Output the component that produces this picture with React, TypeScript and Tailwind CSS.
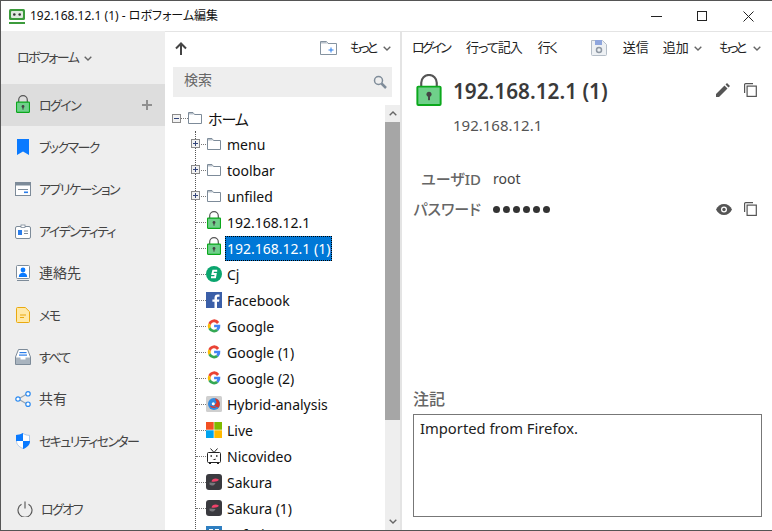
import type { ReactNode } from "react";

function Lock({ className }: { className?: string }) {
  return (
    <svg viewBox="0 0 26 33" className={className}>
      <path d="M5 14V9a8 8 0 0 1 16 0v5" fill="none" stroke="#555" strokeWidth="2.2" />
      <rect x="1" y="13" width="24" height="19" rx="1" fill="#6fd08a" stroke="#0ba81c" strokeWidth="2" />
      <circle cx="13" cy="21" r="2.6" fill="#444" />
      <rect x="12" y="22" width="2" height="5" fill="#444" />
    </svg>
  );
}

function GoogleIcon() {
  return (
    <svg viewBox="0 0 16 16" className="h-4 w-4">
      <path d="M13.2 4 A6.2 6.2 0 0 0 2.4 5.2 L4.8 7 A3.4 3.4 0 0 1 11 5.9 Z" fill="#ea4335" />
      <path d="M2.4 5.2 A6.4 6.4 0 0 0 2.4 10.9 L4.8 9.2 A3.4 3.4 0 0 1 4.8 7 Z" fill="#fbbc05" />
      <path d="M2.4 10.9 A6.3 6.3 0 0 0 12.4 12.7 L10.2 11 A3.4 3.4 0 0 1 4.8 9.2 Z" fill="#34a853" />
      <path d="M8.1 6.8 H14.3 A6.8 6.8 0 0 1 12.4 12.7 L10.2 11 A3.2 3.2 0 0 0 11.2 9.3 H8.1 Z" fill="#4285f4" />
    </svg>
  );
}

function FolderIcon() {
  return (
    <svg viewBox="0 0 14 12" className="h-[12px] w-[14px]">
      <path d="M.5 11.5V.5h4.500l1.500 2h7v9z" fill="#fff" stroke="#7d8b99" />
      <path d="M1 1h3.800l1.100 1.500H1z" fill="#b9c2cb" />
    </svg>
  );
}

function CopyIcon() {
  return (
    <svg viewBox="0 0 13 14" className="h-[14px] w-[13px]" fill="none" stroke="#555" strokeWidth="1.2">
      <path d="M9 .6H1.6a1 1 0 0 0-1 1V10" />
      <rect x="3.1" y="3.1" width="9.2" height="10.3" />
    </svg>
  );
}

function Chevron({ className = "" }: { className?: string }) {
  return (
    <svg viewBox="0 0 8 5" className={`h-[5px] w-2 ${className}`} fill="none" stroke="#666" strokeWidth="1.4">
      <path d="M.7.7 4 4 7.3.7" />
    </svg>
  );
}

const navIcons: Record<string, ReactNode> = {
  login: <Lock className="h-[18px] w-[14px] -translate-y-[1px]" />,
  bookmark: (
    <svg viewBox="0 0 12 16" className="h-4 w-3">
      <path d="M0 0h12v16L6 12.4 0 16z" fill="#0a7aff" />
    </svg>
  ),
  app: (
    <svg viewBox="0 0 16 14" className="h-[14px] w-4">
      <rect x=".5" y=".5" width="15" height="13" fill="#fff" stroke="#7d8b99" />
      <rect x="1" y="1" width="14" height="2.5" fill="#7d8b99" />
      <rect x="3" y="7" width="10" height="1" fill="#7d8b99" />
      <rect x="9" y="9.5" width="4" height="1.6" fill="#2b7de9" />
    </svg>
  ),
  identity: (
    <svg viewBox="0 0 16 15" className="h-[15px] w-4">
      <rect x=".5" y="2.5" width="15" height="12" rx="1.5" fill="#fff" stroke="#7d8b99" />
      <rect x="6" y="1" width="4" height="2.5" fill="#fff" stroke="#7d8b99" strokeWidth=".8" />
      <rect x="3" y="6" width="4" height="5" fill="#2b7de9" />
      <rect x="9" y="6.5" width="4" height="1" fill="#7d8b99" />
      <rect x="9" y="9" width="4" height="1" fill="#7d8b99" />
    </svg>
  ),
  contact: (
    <svg viewBox="0 0 14 16" className="h-4 w-[14px]">
      <rect x=".5" y=".5" width="13" height="13" rx="1" fill="#fff" stroke="#7d8b99" />
      <circle cx="7" cy="5" r="2.4" fill="#0a7aff" />
      <path d="M2.8 12c0-3 2-4.2 4.2-4.2s4.200 1.200 4.200 4.200z" fill="#0a7aff" />
      <rect x="1" y="15" width="12" height="1" fill="#7d8b99" />
    </svg>
  ),
  memo: (
    <svg viewBox="0 0 14 16" className="h-4 w-[14px]">
      <path d="M1.500.5h7.800l4.200 4.200v9.800a1 1 0 0 1-1 1h-11a1 1 0 0 1-1-1v-13a1 1 0 0 1 1-1z" fill="#ffe9a8" stroke="#e9a90f" />
      <rect x="4" y="7.500" width="6" height="1" fill="#e9a90f" />
      <rect x="4" y="10" width="4" height="1" fill="#e9a90f" />
    </svg>
  ),
  all: (
    <svg viewBox="0 0 16 16" className="h-4 w-4">
      <path d="M3.500.5h9L15.500 8v7.500H.5V8z" fill="#fff" stroke="#7d8b99" />
      <rect x="4.500" y="3" width="7" height="1.200" fill="#2b7de9" />
      <rect x="4" y="5.500" width="8" height="1.200" fill="#2b7de9" />
      <path d="M1 8.500h4.500v2h5v-2H15V15H1z" fill="#a9b4bf" />
    </svg>
  ),
  share: (
    <svg viewBox="0 0 16 16" className="h-4 w-4" fill="#fff" stroke="#2b8af0" strokeWidth="1.200">
      <path d="M5 7 11 3.500M5 9l6 3.500" stroke="#9aa5b0" />
      <circle cx="3" cy="8" r="2.200" />
      <circle cx="13" cy="2.800" r="2.200" />
      <circle cx="13" cy="13.200" r="2.200" />
    </svg>
  ),
  security: (
    <svg viewBox="0 0 14 16" className="h-4 w-[14px]">
      <path d="M7 .5c2 1.200 4 1.800 6.500 1.800V8c0 3.600-2.800 6-6.500 7.500C3.300 14 .5 11.600.5 8V2.300C3 2.300 5 1.700 7 .5z" fill="#fff" stroke="#a9c6ea" />
      <path d="M7 0v8H0V2c2.500 0 5-.7 7-2zM7 8h7c0 4-3 6.500-7 8z" fill="#0a7aff" />
    </svg>
  ),
};

const navItems = [
  { key: "login", label: "ログイン", active: true, kana: true },
  { key: "bookmark", label: "ブックマーク", kana: true },
  { key: "app", label: "アプリケーション", kana: true },
  { key: "identity", label: "アイデンティティ", kana: true },
  { key: "contact", label: "連絡先", kana: false },
  { key: "memo", label: "メモ", kana: true },
  { key: "all", label: "すべて", kana: true },
  { key: "share", label: "共有", kana: false },
  { key: "security", label: "セキュリティセンター", kana: true },
];

const treeIcons: Record<string, ReactNode> = {
  folder: <FolderIcon />,
  lock: <Lock className="h-[18px] w-[14px] -translate-y-[2px]" />,
  cj: (
    <svg viewBox="0 0 16 16" className="h-4 w-4">
      <circle cx="8" cy="8" r="8" fill="#0aa56e" />
      <path d="M11.200 4.800H7.200L6.400 8h3.300l-.6 3.200H5" fill="none" stroke="#fff" strokeWidth="1.900" />
    </svg>
  ),
  facebook: (
    <svg viewBox="0 0 16 16" className="h-4 w-4">
      <rect width="16" height="16" fill="#3b5fa8" />
      <path d="M11 16V9.800h2l.4-2.400H11V6c0-.8.3-1.200 1.200-1.200h1.300V2.600C13 2.500 12.300 2.500 11.700 2.500 9.700 2.500 8.500 3.700 8.500 5.800v1.600H6.400v2.400h2.100V16z" fill="#fff" />
    </svg>
  ),
  google: <GoogleIcon />,
  hybrid: (
    <svg viewBox="0 0 16 16" className="h-4 w-4">
      <rect width="16" height="16" rx="1.500" fill="#cfcfcf" />
      <circle cx="8" cy="8" r="6" fill="#2f8ae0" />
      <path d="M9 2.200a6 6 0 0 1 3.500 9.500L8 9.800 10.500 6.500z" fill="#d9362b" />
      <path d="M3.500 9.500C5 12 8 12.500 10.500 11.500L7.500 10.500z" fill="#d9362b" />
      <circle cx="7.300" cy="7.800" r="1.500" fill="#fff" />
    </svg>
  ),
  live: (
    <svg viewBox="0 0 16 16" className="h-4 w-4">
      <rect width="7.700" height="7.700" fill="#f25022" />
      <rect x="8.300" width="7.700" height="7.700" fill="#7fba00" />
      <rect y="8.300" width="7.700" height="7.700" fill="#00a4ef" />
      <rect x="8.300" y="8.300" width="7.700" height="7.700" fill="#ffb900" />
    </svg>
  ),
  nico: (
    <svg viewBox="0 0 16 16" className="h-4 w-4" fill="none" stroke="#222">
      <rect x="1.500" y="4.500" width="13" height="10" rx="1" />
      <path d="M4.500.5 8 4.500 11.500.5" />
      <path d="M4.500 8h1.500M10 8h1.500" strokeWidth="1.500" />
      <path d="M6.500 12h3V10.500z" fill="#222" stroke="none" />
      <path d="M3 15.500h2M11 15.500h2" />
    </svg>
  ),
  sakura: (
    <svg viewBox="0 0 16 16" className="h-4 w-4">
      <rect width="16" height="16" rx="3" fill="#3a3a3f" />
      <path d="M5.500 7.500C6 4.500 10 3.500 13 5.800 12 7.500 8.500 8 5.500 7.500z" fill="#f0426a" />
      <path d="M3.500 8.500 9.500 9c-.5 2.500-4 3.500-6 1.500z" fill="#77777c" />
    </svg>
  ),
  safari: (
    <svg viewBox="0 0 16 16" className="h-4 w-4">
      <rect width="16" height="16" fill="#2f7fc1" />
      <rect x="3" y="3" width="4" height="13" fill="#fff" />
      <rect x="9" y="3" width="4" height="13" fill="#fff" />
    </svg>
  ),
};

const treeRows = [
  { label: "menu", icon: "folder", expand: true },
  { label: "toolbar", icon: "folder", expand: true },
  { label: "unfiled", icon: "folder", expand: true },
  { label: "192.168.12.1", icon: "lock" },
  { label: "192.168.12.1 (1)", icon: "lock", selected: true },
  { label: "Cj", icon: "cj" },
  { label: "Facebook", icon: "facebook" },
  { label: "Google", icon: "google" },
  { label: "Google (1)", icon: "google" },
  { label: "Google (2)", icon: "google" },
  { label: "Hybrid-analysis", icon: "hybrid" },
  { label: "Live", icon: "live" },
  { label: "Nicovideo", icon: "nico" },
  { label: "Sakura", icon: "sakura" },
  { label: "Sakura (1)", icon: "sakura" },
  { label: "Safari", icon: "safari" },
];

function ExpandBox({ sign }: { sign: "+" | "-" }) {
  return (
    <svg viewBox="0 0 9 9" className="h-[9px] w-[9px]">
      <rect x=".5" y=".5" width="8" height="8" fill="#f2f2f2" stroke="#8a8a8a" />
      <rect x="2" y="4" width="5" height="1" fill="#33457a" />
      {sign === "+" && <rect x="4" y="2" width="1" height="5" fill="#33457a" />}
    </svg>
  );
}

function Sidebar() {
  return (
    <aside className="flex w-[164px] shrink-0 flex-col bg-[#eeeeee] text-[#444]">
      <div className="flex h-[53px] items-center gap-[6px] pl-4 pt-[1px] text-[13px] tracking-[-1.6px] whitespace-nowrap">
        ロボフォーム
        <Chevron />
      </div>
      {navItems.map((item) => (
        <div
          key={item.key}
          className={`flex h-[42px] items-center ${item.active ? "bg-[#dddddd]" : ""}`}
        >
          <span className="mr-[1px] flex w-[37px] shrink-0 justify-center pl-[7px]">{navIcons[item.key]}</span>
          <span className={`flex-1 whitespace-nowrap ${item.kana ? "pt-[2px] text-[13px] tracking-[-1.6px]" : "pb-[2px] text-[14px]"}`}>
            {item.label}
          </span>
          {item.active && (
            <svg viewBox="0 0 10 10" className="mr-[13px] h-[10px] w-[10px]">
              <path d="M4 0h2v4h4v2H6v4H4V6H0V4h4z" fill="#8f8f8f" />
            </svg>
          )}
        </div>
      ))}
      <div className="mt-auto flex h-[42px] items-center">
        <span className="flex w-[40px] shrink-0 justify-center pl-[8px]">
          <svg viewBox="0 0 16 16" className="h-4 w-4" fill="none" stroke="#555" strokeWidth="1.100">
            <path d="M8 .5v7M4.500 3.200a7 7 0 1 0 7 0" />
          </svg>
        </span>
        <span className="pt-[2px] text-[13px] tracking-[-1.6px]">ログオフ</span>
      </div>
    </aside>
  );
}

function TreePane() {
  return (
    <section className="flex w-[237px] shrink-0 flex-col border-r-2 border-[#e4e4e4]">
      <div className="flex h-[29px] shrink-0 items-center pl-[10px] pr-[9px] pt-[3px] text-[13px] text-[#222]">
        <svg viewBox="0 0 12 13" className="h-[13px] w-3" fill="none" stroke="#444" strokeWidth="2">
          <path d="M6 13V1.500M1 6.500l5-5 5 5" />
        </svg>
        <svg viewBox="0 0 17 14" className="ml-auto h-[14px] w-[17px]">
          <path d="M.5 13.500V.5h6l1.500 2h8.500v11z" fill="#fff" stroke="#8593a0" />
          <path d="M1 1h5l1.300 1.500H1z" fill="#b9c2cb" />
          <path d="M11 6.500v5M8.500 9h5" stroke="#2b7de9" />
        </svg>
        <span className="ml-[13px] tracking-[-3px] whitespace-nowrap">もっと</span>
        <Chevron className="ml-[8px]" />
      </div>
      <div className="mx-2 mt-[6px] flex h-[30px] shrink-0 items-center justify-between bg-[#eeeeee] pl-[11px] pr-[5px] text-[14px] text-[#666]">
        <span className="pb-[5px]">検索</span>
        <svg viewBox="0 0 14 14" className="h-[14px] w-[14px]" fill="none" stroke="#7f8c99" strokeWidth="1.500">
          <circle cx="5.500" cy="5.500" r="4" />
          <path d="M8.500 8.500 13 13" strokeWidth="2.500" />
        </svg>
      </div>
      <div className="mt-2 flex min-h-0 flex-1">
        <div className="min-w-0 flex-1 overflow-hidden pl-[7px] text-[14px] text-[#111]">
          <div className="flex h-[26px] items-center">
            <ExpandBox sign="-" />
            <span className="h-0 w-[7px] border-t border-dotted border-[#777]" />
            <FolderIcon />
            <span className="ml-[6px] pt-[2px] text-[15px] tracking-[-1px]">ホーム</span>
          </div>
          <div className="ml-[23px] border-l border-dotted border-[#555]">
            {treeRows.map((row) => (
              <div key={row.label} className="relative flex h-[26px] items-center">
                {row.expand && (
                  <span className="absolute -left-[5px] top-[8px] flex">
                    <ExpandBox sign="+" />
                  </span>
                )}
                <span className="h-0 w-[10px] shrink-0 border-t border-dotted border-[#777]" />
                <span className="flex w-4 shrink-0 justify-center">{treeIcons[row.icon]}</span>
                {row.selected ? (
                  <span className="ml-[3px] flex h-[25px] items-center border border-dotted border-black bg-[#0078d7] px-[1px] whitespace-nowrap text-white">
                    {row.label}
                  </span>
                ) : (
                  <span className="ml-[5px] whitespace-nowrap">{row.label}</span>
                )}
              </div>
            ))}
          </div>
        </div>
        <div className="flex w-[15px] shrink-0 flex-col bg-[#eeeeee]">
          <div className="flex h-[17px] items-center justify-center">
            <Chevron className="rotate-180" />
          </div>
          <div className="h-[298px] bg-[#a6a6a6]" />
          <div className="mt-auto flex h-[17px] items-center justify-center">
            <Chevron />
          </div>
        </div>
      </div>
    </section>
  );
}

function DetailPane() {
  return (
    <section className="flex min-w-0 flex-1 flex-col text-[#333]">
      <div className="flex h-[29px] shrink-0 items-center pl-[10px] pr-[11px] pt-[3px] text-[13px] whitespace-nowrap text-[#222]">
        <span className="tracking-[-2.6px]">ログイン</span>
        <span className="ml-[17px] tracking-[-1px]">行って記入</span>
        <span className="ml-[16px] tracking-[-1.5px]">行く</span>
        <svg viewBox="0 0 16 16" className="ml-[34px] h-4 w-4">
          <path d="M.5.5h11l4 4v10a1 1 0 0 1-1 1h-13a1 1 0 0 1-1-1z" fill="#eef1f4" stroke="#b4bdc7" />
          <rect x="4" y="0" width="7" height="5" fill="#8fa6dd" />
          <circle cx="8" cy="10" r="2.500" fill="none" stroke="#8e98a3" strokeWidth="1.500" />
        </svg>
        <span className="ml-[16px]">送信</span>
        <span className="ml-[14px]">追加</span>
        <Chevron className="ml-[5px]" />
        <span className="ml-auto tracking-[-3px]">もっと</span>
        <Chevron className="ml-[9px]" />
      </div>
      <div className="mt-[13px] flex h-[32px] shrink-0 items-center pl-[14px] pr-[15px]">
        <Lock className="h-[32px] w-[26px]" />
        <h1 className="ml-[11px] pt-[3px] text-[20.75px] font-semibold whitespace-nowrap text-[#3a3a3a]">192.168.12.1 (1)</h1>
        <svg viewBox="0 0 14 14" className="ml-auto h-[14px] w-[14px]">
          <path d="M0 14v-3L8.500 2.500l3 3L3 14zM9.500 1.500 11 0l3 3-1.500 1.500z" fill="#555" />
        </svg>
        <span className="ml-[14px] flex"><CopyIcon /></span>
      </div>
      <p className="ml-[51px] mt-[9px] text-[15px] leading-[20px] text-[#555]">192.168.12.1</p>
      <div className="mt-[34px] flex h-[20px] items-center text-[14px]">
        <span className="w-[79px] text-right text-[15px] font-medium whitespace-nowrap text-[#666]">ユーザID</span>
        <span className="ml-[12px] pb-[2px] text-[#444]">root</span>
      </div>
      <div className="mt-[10px] flex h-[20px] items-center pr-[15px] text-[14px]">
        <span className="w-[79px] text-right text-[15px] font-medium whitespace-nowrap text-[#666]">パスワード</span>
        <span className="ml-[12px] flex gap-[3px]">
          {[0, 1, 2, 3, 4, 5].map((i) => (
            <span key={i} className="h-[7px] w-[7px] rounded-full bg-[#333]" />
          ))}
        </span>
        <svg viewBox="0 0 16 11" className="ml-auto h-[11px] w-4">
          <path d="M0 5.500C1.500 2 4.500 0 8 0s6.500 2 8 5.500C14.500 9 11.500 11 8 11S1.500 9 0 5.500z" fill="#555" />
          <circle cx="8" cy="5.500" r="3" fill="#fff" />
          <circle cx="8" cy="5.500" r="1.700" fill="#555" />
        </svg>
        <span className="ml-[12px] flex"><CopyIcon /></span>
      </div>
      <div className="mt-auto pl-[11px] pr-[10px] pb-[13px]">
        <div className="text-[16px] leading-[20px] font-medium text-[#666]">注記</div>
        <div className="mt-[5px] h-[103px] border border-[#777] px-[6px] py-[3px] text-[14.75px] leading-[20px] text-[#222]">
          Imported from Firefox.
        </div>
      </div>
    </section>
  );
}

export default function App() {
  return (
    <div className="flex h-screen w-screen flex-col overflow-hidden border-t border-b border-l border-[#555] bg-white font-['Noto_Sans','Noto_Sans_CJK_JP',sans-serif] [font-feature-settings:'palt']">
      <header className="flex h-[30px] shrink-0 items-center pl-[8px] text-[12px] text-[#111]">
        <svg viewBox="0 0 16 15" className="h-[15px] w-4">
          <rect x="0" y="0" width="16" height="11" rx="1.500" fill="#3c9b3c" />
          <rect x="2" y="2" width="12" height="7" rx="1" fill="#dfe9df" />
          <circle cx="5.300" cy="5.500" r="1.300" fill="#333" />
          <circle cx="10.700" cy="5.500" r="1.300" fill="#333" />
          <rect x="0" y="13" width="16" height="2" fill="#3c9b3c" />
        </svg>
        <span className="ml-[5px] whitespace-nowrap">192.168.12.1 (1) - ロボフォーム編集</span>
        <div className="ml-auto flex items-center pr-[18px]">
          <span className="h-px w-[11px] bg-[#222]" />
          <span className="ml-[35px] h-[10px] w-[10px] border border-[#222]" />
          <svg viewBox="0 0 11 11" className="ml-[36px] h-[11px] w-[11px]" stroke="#222">
            <path d="M.5.500l10 10M10.500.500l-10 10" />
          </svg>
        </div>
      </header>
      <div className="flex min-h-0 flex-1">
        <Sidebar />
        <div className="flex min-w-0 flex-1 flex-col">
          <div className="flex min-h-0 flex-1 border-t border-[#e4e4e4]">
            <TreePane />
            <DetailPane />
          </div>
        </div>
      </div>
    </div>
  );
}
